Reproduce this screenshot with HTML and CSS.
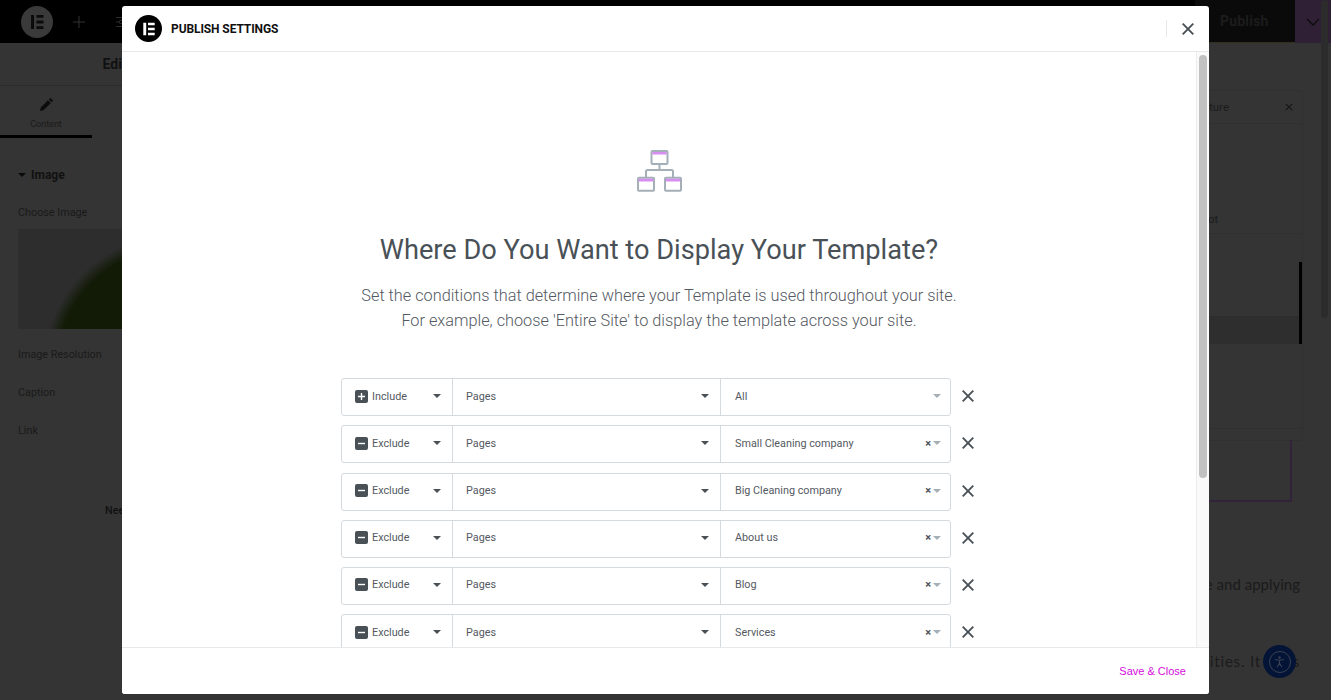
FILE: index.html
```html
<!DOCTYPE html>
<html lang="en">
<head>
<meta charset="utf-8">
<title>Publish Settings</title>
<link rel="stylesheet" href="styles.css">
</head>
<body>
<div class="editor">
  <header class="topbar">
    <div class="logo-bg"><svg viewBox="0 0 32 32" width="32" height="32"><path fill="#0b0b0b" d="M10 9h3v14h-3zM15.500 9h7v2.800h-7zM15.500 14.600h7v2.800h-7zM15.500 20.200h7V23h-7z"/></svg></div>
    <svg class="top-plus" viewBox="0 0 14 14" width="14" height="14"><path d="M7 1v12M1 7h12" stroke="#333" stroke-width="1"/></svg>
    <svg class="top-sliders" viewBox="0 0 14 14" width="14" height="14"><path d="M0 2.500h14M0 7h14M0 11.500h14" stroke="#2c2c2c" stroke-width="1"/><circle cx="5" cy="7" r="1.800" fill="#000" stroke="#2c2c2c"/></svg>
    <div class="top-right">
      <div class="publish">Publish</div>
      <div class="chev"><svg viewBox="0 0 14 8" width="14" height="8"><path d="M1 1l6 6 6-6" fill="none" stroke="#0d0d0d" stroke-width="1.300"/></svg></div>
    </div>
  </header>
  <div class="workspace">
    <aside class="sidebar">
      <div class="side-title">Edit Image</div>
      <div class="side-tabs">
        <div class="tab">
          <svg viewBox="0 0 14 14" width="13" height="13"><path fill="#0c0c0c" d="M0 14l.8-3.800L8.600 2.400l3 3-7.800 7.800zM9.500 1.500L10.800.2q.4-.3.800 0l2.200 2.200q.3.400 0 .8l-1.300 1.300z"/></svg>
          <span>Content</span>
        </div>
      </div>
      <div class="side-section"><i class="tri"></i>Image</div>
      <div class="side-label choose">Choose Image</div>
      <div class="thumb"></div>
      <div class="side-label res">Image Resolution</div>
      <div class="side-label cap">Caption</div>
      <div class="side-label lnk">Link</div>
      <div class="side-help">Need Help</div>
    </aside>
    <main class="preview">
      <div class="float-panel">
        <div class="fp-head"><span>Structure</span><svg viewBox="0 0 10 10" width="8" height="8"><path d="M1 1l8 8M9 1l-8 8" stroke="#151515" stroke-width="1.300"/></svg></div>
        <div class="fp-a"><span>Snapshot</span></div>
        <div class="fp-b"><div class="fp-sel"></div></div>
      </div>
      <div class="purple-box"></div>
      <p class="para one">the image and applying</p>
      <p class="para two">ities. It does</p>
    </main>
  </div>
</div>
<div class="page-scroll"></div>
<div class="a11y"><span><svg viewBox="0 0 16 16" width="13" height="13"><circle cx="8" cy="3" r="1.500" fill="#3b4252"/><path d="M2.500 5.500L8 6.500l5.500-1M8 6.500v3.500M8 10l-3 5M8 10l3 5" fill="none" stroke="#3b4252" stroke-width="1.300"/></svg></span></div>

<section class="modal">
  <div class="modal-head">
    <div class="modal-logo"><svg viewBox="0 0 28 28" width="28" height="28"><path fill="#fff" d="M8.300 7.800h2.900v12.400H8.300zM13 7.800h6.700v2.500H13zM13 12.750h6.700v2.500H13zM13 17.700h6.700v2.500H13z"/></svg></div>
    <div class="modal-title">PUBLISH SETTINGS</div>
    <div class="head-sep"></div>
    <svg class="modal-close" viewBox="0 0 12 12" width="12" height="12"><path d="M.7.700l10.600 10.600M11.300.700L.7 11.300" stroke="#495157" stroke-width="1.900"/></svg>
  </div>
  <div class="modal-main">
    <div class="modal-body">
      <svg class="hero" viewBox="0.500 0 46 42" width="46" height="42">
        <g fill="none" stroke="#a4afb7" stroke-width="2">
          <rect x="15" y="1" width="16" height="13" rx="1"/>
          <rect x="1.500" y="27.750" width="16" height="13" rx="1"/>
          <rect x="28.500" y="27.750" width="16" height="13" rx="1"/>
          <path d="M23 14v6M9.500 27.500V21.500q0-1.500 1.500-1.500h24q1.500 0 1.500 1.500v6"/>
        </g>
        <path fill="#d68ef0" d="M15.800 2h14.400v2.600H15.800zM2.300 28.800h14.400v2.600H2.300zM29.300 28.800h14.400v2.600H29.300z"/>
      </svg>
      <h1 class="headline">Where Do You Want to Display Your Template?</h1>
      <p class="lead">Set the conditions that determine where your Template is used throughout your site.<br>For example, choose 'Entire Site' to display the template across your site.</p>
      <div class="rows">
        <div class="row">
          <div class="cond">
            <div class="cell c-type"><svg class="sign" viewBox="0 0 13 13" width="13" height="13"><rect width="13" height="13" rx="2" fill="#495157"/><path d="M3 6.500h7M6.500 3v7" stroke="#fff" stroke-width="1.400"/></svg><span>Include</span><i class="caret"></i></div>
            <div class="cell c-kind"><span>Pages</span><i class="caret"></i></div>
            <div class="cell c-val"><span>All</span><i class="caret light"></i></div>
          </div>
          <svg class="del" viewBox="0 0 12 12" width="12" height="12"><path d="M.7.700l10.600 10.600M11.300.700L.7 11.300" stroke="#495157" stroke-width="1.900"/></svg>
        </div>
        <div class="row">
          <div class="cond">
            <div class="cell c-type"><svg class="sign" viewBox="0 0 13 13" width="13" height="13"><rect width="13" height="13" rx="2" fill="#495157"/><path d="M3 6.500h7" stroke="#fff" stroke-width="1.400"/></svg><span>Exclude</span><i class="caret"></i></div>
            <div class="cell c-kind"><span>Pages</span><i class="caret"></i></div>
            <div class="cell c-val"><span>Small Cleaning company</span><b class="clear">×</b><i class="caret light"></i></div>
          </div>
          <svg class="del" viewBox="0 0 12 12" width="12" height="12"><path d="M.7.700l10.600 10.600M11.300.700L.7 11.300" stroke="#495157" stroke-width="1.900"/></svg>
        </div>
        <div class="row">
          <div class="cond">
            <div class="cell c-type"><svg class="sign" viewBox="0 0 13 13" width="13" height="13"><rect width="13" height="13" rx="2" fill="#495157"/><path d="M3 6.500h7" stroke="#fff" stroke-width="1.400"/></svg><span>Exclude</span><i class="caret"></i></div>
            <div class="cell c-kind"><span>Pages</span><i class="caret"></i></div>
            <div class="cell c-val"><span>Big Cleaning company</span><b class="clear">×</b><i class="caret light"></i></div>
          </div>
          <svg class="del" viewBox="0 0 12 12" width="12" height="12"><path d="M.7.700l10.600 10.600M11.300.700L.7 11.300" stroke="#495157" stroke-width="1.900"/></svg>
        </div>
        <div class="row">
          <div class="cond">
            <div class="cell c-type"><svg class="sign" viewBox="0 0 13 13" width="13" height="13"><rect width="13" height="13" rx="2" fill="#495157"/><path d="M3 6.500h7" stroke="#fff" stroke-width="1.400"/></svg><span>Exclude</span><i class="caret"></i></div>
            <div class="cell c-kind"><span>Pages</span><i class="caret"></i></div>
            <div class="cell c-val"><span>About us</span><b class="clear">×</b><i class="caret light"></i></div>
          </div>
          <svg class="del" viewBox="0 0 12 12" width="12" height="12"><path d="M.7.700l10.600 10.600M11.300.700L.7 11.300" stroke="#495157" stroke-width="1.900"/></svg>
        </div>
        <div class="row">
          <div class="cond">
            <div class="cell c-type"><svg class="sign" viewBox="0 0 13 13" width="13" height="13"><rect width="13" height="13" rx="2" fill="#495157"/><path d="M3 6.500h7" stroke="#fff" stroke-width="1.400"/></svg><span>Exclude</span><i class="caret"></i></div>
            <div class="cell c-kind"><span>Pages</span><i class="caret"></i></div>
            <div class="cell c-val"><span>Blog</span><b class="clear">×</b><i class="caret light"></i></div>
          </div>
          <svg class="del" viewBox="0 0 12 12" width="12" height="12"><path d="M.7.700l10.600 10.600M11.300.700L.7 11.300" stroke="#495157" stroke-width="1.900"/></svg>
        </div>
        <div class="row">
          <div class="cond">
            <div class="cell c-type"><svg class="sign" viewBox="0 0 13 13" width="13" height="13"><rect width="13" height="13" rx="2" fill="#495157"/><path d="M3 6.500h7" stroke="#fff" stroke-width="1.400"/></svg><span>Exclude</span><i class="caret"></i></div>
            <div class="cell c-kind"><span>Pages</span><i class="caret"></i></div>
            <div class="cell c-val"><span>Services</span><b class="clear">×</b><i class="caret light"></i></div>
          </div>
          <svg class="del" viewBox="0 0 12 12" width="12" height="12"><path d="M.7.700l10.600 10.600M11.300.700L.7 11.300" stroke="#495157" stroke-width="1.900"/></svg>
        </div>
      </div>
    </div>
    <div class="modal-track"><div class="modal-thumb"></div></div>
  </div>
  <div class="modal-foot"><span class="save">Save &amp; Close</span></div>
</section>
</body>
</html>
```

FILE: styles.css
```css
* { box-sizing: border-box; }
html, body { margin: 0; height: 100%; overflow: hidden; }
body { background: #343434; font-family: Roboto, "Liberation Sans", sans-serif; position: relative; }

.editor { height: 700px; display: flex; flex-direction: column; }
.topbar { height: 43px; flex: none; background: #000; display: flex; align-items: center; padding-left: 21px; position: relative; }
.logo-bg { width: 32px; height: 32px; border-radius: 50%; background: #3a3a3a; }
.top-plus { margin-left: 19px; }
.top-sliders { margin-left: 30px; }
.top-right { margin-left: auto; display: flex; height: 43px; }
.publish { width: 100px; background: #0a0a0a; color: #1c1c1c; font-size: 14px; font-weight: 700; padding-left: 25px; line-height: 43px; letter-spacing: .2px; border-bottom: 1px solid #33301f; }
.chev { width: 36px; background: #2f2035; display: flex; align-items: center; justify-content: center; }

.workspace { flex: 1; display: flex; min-height: 0; }
.sidebar { width: 300px; flex: none; background: #343434; color: #1a1a1a; font-size: 10.800px; }
.side-title { height: 43px; text-align: center; font-size: 14px; font-weight: 700; line-height: 43px; color: #111; border-bottom: 1px solid #2c2c2c; padding-right: 28px; }
.side-tabs { height: 52px; }
.tab { width: 92px; height: 52px; border-bottom: 3px solid #000; display: flex; flex-direction: column; align-items: center; padding-top: 12px; gap: 8px; font-size: 9px; line-height: 11px; color: #1a1a1a; }
.side-section { margin: 30px 0 0 18px; font-size: 12px; font-weight: 700; color: #111; display: flex; align-items: center; height: 14px; }
.tri { width: 0; height: 0; border: 4px solid transparent; border-top: 4px solid #0a0a0a; border-bottom: 0; margin-right: 5px; }
.side-label { margin-left: 18px; line-height: 13px; }
.choose { margin-top: 24px; }
.thumb { margin: 10px 0 0 18px; height: 100px; background:
  radial-gradient(circle 135px at 160px 140px, #121b06 90%, transparent 100%), #2d2d2d; }
.res { margin-top: 19px; }
.cap { margin-top: 25px; }
.lnk { margin-top: 25px; }
.side-help { margin: 67px 0 0 105px; color: #111; font-weight: 500; }

.preview { flex: 1; position: relative; color: #1b1b1b; }
.float-panel { position: absolute; right: 28px; top: 47px; width: 560px; height: 351px; border: 1px solid #303030; border-radius: 4px; font-size: 11px; color: #1b1b1b; }
.fp-head { height: 33px; border-bottom: 1px solid #303030; display: flex; justify-content: flex-end; align-items: center; gap: 56px; padding-right: 9px; font-size: 11.500px; }
.fp-a { height: 110px; border-bottom: 1px solid #303030; padding-top: 89px; text-align: right; padding-right: 84px; }
.fp-b { height: 195px; border-bottom: 1px solid #303030; position: relative; }
.fp-sel { position: absolute; left: 0; right: 0; top: 82px; height: 28px; background: #2e2e2e; border-right: 3px solid #000; }
.fp-sel::before { content: ""; position: absolute; right: -3px; bottom: 0; width: 3px; height: 82px; background: #000; }
.purple-box { position: absolute; right: 39px; top: 397px; width: 300px; height: 62px; border-right: 2px solid #31243a; border-bottom: 2px solid #31243a; }
.para { position: absolute; right: 31px; margin: 0; font-family: Lato, sans-serif; font-size: 15px; color: #1b1b1b; white-space: nowrap; }
.para.one { top: 532px; }
.para.two { top: 609px; letter-spacing: .8px; }

.page-scroll { position: absolute; left: 1321px; top: 0; width: 7px; height: 318px; border-radius: 4px; background: #2c2c2c; }
.a11y { position: absolute; left: 1263px; top: 645px; width: 33px; height: 33px; border-radius: 50%; background: #031437; display: flex; align-items: center; justify-content: center; }
.a11y span { width: 22px; height: 22px; border: 1px solid #3b4252; border-radius: 50%; display: flex; align-items: center; justify-content: center; }

.modal { position: absolute; left: 122px; top: 6px; width: 1087px; height: 688px; background: #fff; border-radius: 3px; display: flex; flex-direction: column; overflow: hidden; }
.modal-head { height: 46px; flex: none; border-bottom: 1px solid #e6e9ec; display: flex; align-items: center; padding: 0 15px 0 13px; }
.modal-logo { width: 27px; height: 27px; border-radius: 50%; background: #000; overflow: hidden; }
.modal-title { margin-left: 9px; font-size: 12px; font-weight: 700; color: #111; letter-spacing: -.1px; }
.head-sep { margin-left: auto; width: 1px; height: 17px; background: #e6e9ec; }
.modal-close { margin-left: 15px; }

.modal-main { flex: 1; display: flex; min-height: 0; }
.modal-body { flex: 1; min-width: 0; overflow: hidden; display: flex; flex-direction: column; align-items: center; padding-top: 98px; color: #54595f; }
.hero { flex: none; margin-left: 1px; }
.headline { margin: 41px 0 0; font-size: 27.200px; font-weight: 400; line-height: 34px; color: #495157; white-space: nowrap; }
.lead { margin: 16px 0 0; font-size: 16.300px; font-weight: 300; line-height: 25px; text-align: center; white-space: nowrap; }
.rows { margin: 45.200px 0 0 219px; flex: none; display: flex; flex-direction: column; gap: 9.200px; width: 634px; align-self: flex-start; }
.row { display: flex; align-items: center; height: 38px; flex: none; }
.cond { width: 610px; height: 38px; border: 1px solid #d5dadf; border-radius: 3px; display: flex; }
.cell { height: 100%; display: flex; align-items: center; font-size: 10.800px; color: #54595f; padding-bottom: 2px !important; }
.cell + .cell { border-left: 1px solid #d5dadf; }
.c-type { width: 110px; padding: 0 11px 0 13px; }
.c-kind { width: 268px; padding: 0 11px 0 13px; }
.c-val { flex: 1; padding: 0 9px 0 14px; }
.sign { margin-right: 4px; }
.caret { margin-left: auto; width: 0; height: 0; border: 4px solid transparent; border-top: 4px solid #495157; border-bottom: 0; }
.caret.light { border-top-color: #a4afb7; }
.clear { margin-left: auto; font-size: 11px; font-weight: 700; color: #495157; }
.clear + .caret { margin-left: 2px; }
.del { margin: 0 0 2px 11px; }

.modal-track { width: 13px; flex: none; background: #fafafa; border-left: 1px solid #ececec; padding: 3px 2px 0 2px; }
.modal-thumb { height: 423px; border-radius: 4px; background: #c1c1c1; }
.modal-foot { height: 47px; flex: none; border-top: 1px solid #e6e9ec; display: flex; align-items: center; justify-content: flex-end; padding-right: 23px; background: #fff; }
.save { color: #d40cdd; font-family: "Liberation Sans", sans-serif; font-size: 11px; }
```
